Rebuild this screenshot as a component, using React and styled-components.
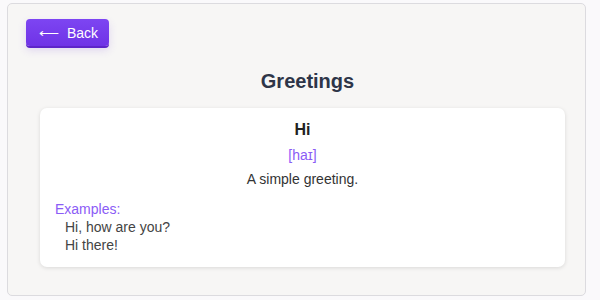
import React from 'react';
import styled, { createGlobalStyle } from 'styled-components';

const GlobalStyle = createGlobalStyle`
  html, body {
    margin: 0;
    padding: 0;
    background: #faf9fb;
    font-family: "Liberation Sans", Arial, sans-serif;
  }
`;

const Page = styled.div`
  width: 600px;
  height: 300px;
  padding: 3px 14px 4px 7px;
  box-sizing: border-box;
`;

const Panel = styled.div`
  height: 100%;
  box-sizing: border-box;
  background: #f7f6f5;
  border: 1px solid #dcdbdf;
  border-radius: 5px;
  padding: 15px 20px 0 18px;
  display: flex;
  flex-direction: column;
`;

const BackButton = styled.button`
  align-self: flex-start;
  width: 83px;
  height: 27px;
  border: none;
  border-radius: 4px;
  background: linear-gradient(#7d45f2, #6f33e6);
  box-shadow: 0 2px 0 #5d25c9, 0 4px 8px rgba(110, 60, 220, 0.18);
  color: #ffffff;
  font-family: "Liberation Sans", Arial, sans-serif;
  font-size: 14px;
  display: flex;
  align-items: center;
  gap: 8px;
  padding: 0 0 0 13px;
  cursor: pointer;
`;

const Title = styled.h2`
  margin: 24px 0 0 0;
  text-align: center;
  font-size: 20px;
  font-weight: bold;
  color: #2e3548;
  padding-left: 24px;
`;

const Card = styled.div`
  margin: 15px 0 0 14px;
  width: 525px;
  height: 159px;
  box-sizing: border-box;
  background: #ffffff;
  border-radius: 7px;
  box-shadow: 0 1px 4px rgba(0, 0, 0, 0.12);
  padding: 13px 15px 0 15px;
`;

const Word = styled.div`
  text-align: center;
  font-size: 16px;
  font-weight: bold;
  color: #222222;
`;

const Phonetic = styled.div`
  text-align: center;
  margin-top: 8px;
  font-size: 14px;
  color: #8b5cf6;
`;

const Meaning = styled.div`
  text-align: center;
  margin-top: 8px;
  font-size: 14px;
  color: #333333;
`;

const ExamplesLabel = styled.div`
  margin-top: 14px;
  font-size: 14px;
  color: #8b5cf6;
`;

const Example = styled.div`
  margin: 2px 0 0 10px;
  font-size: 14px;
  color: #444444;
`;

export default function App() {
  return (
    <>
      <GlobalStyle />
      <Page>
        <Panel>
          <BackButton>
            <span>⟵</span>
            <span>Back</span>
          </BackButton>
          <Title>Greetings</Title>
          <Card>
            <Word>Hi</Word>
            <Phonetic>[haɪ]</Phonetic>
            <Meaning>A simple greeting.</Meaning>
            <ExamplesLabel>Examples:</ExamplesLabel>
            <Example>Hi, how are you?</Example>
            <Example>Hi there!</Example>
          </Card>
        </Panel>
      </Page>
    </>
  );
}
